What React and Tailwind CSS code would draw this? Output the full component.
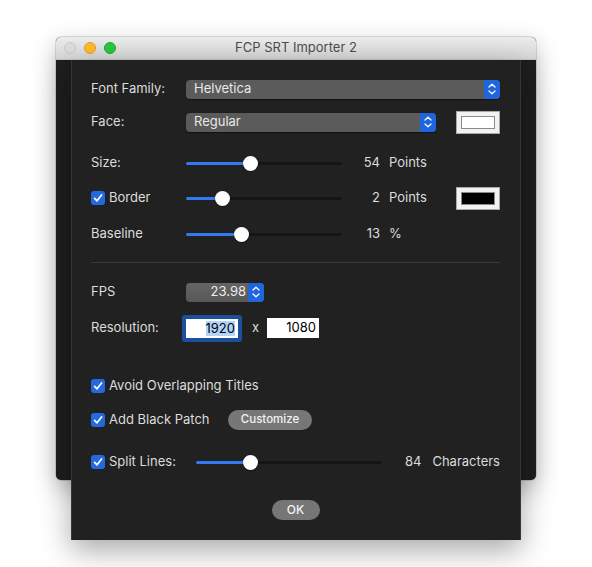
import React from "react";

const font = { fontFamily: "Inter, 'Liberation Sans', sans-serif" };

const Check = () => (
  <span className="flex h-[14px] w-[14px] shrink-0 items-center justify-center rounded-[3px] bg-[#2469e0]">
    <svg width="12" height="12" viewBox="0 0 12 12">
      <path d="M2.6 6.3 L5 8.8 L9.6 3" fill="none" stroke="white" strokeWidth="1.7" strokeLinecap="round" strokeLinejoin="round" />
    </svg>
  </span>
);

const Stepper = ({ w = "w-4" }) => (
  <span className={`flex h-full ${w} shrink-0 items-center justify-center rounded-r-[4px] bg-[#1f66de]`}>
    <svg width="10" height="14" viewBox="0 0 10 14">
      <path d="M2 5 L5 2.3 L8 5" fill="none" stroke="white" strokeWidth="1.3" strokeLinecap="round" strokeLinejoin="round" />
      <path d="M2 9 L5 11.7 L8 9" fill="none" stroke="white" strokeWidth="1.3" strokeLinecap="round" strokeLinejoin="round" />
    </svg>
  </span>
);

const Popup = ({ text, width }) => (
  <div className={`flex h-[19px] ${width} items-center rounded-[4px] bg-[#5b5b5b] shadow-[0_0.5px_1px_rgba(0,0,0,0.5)]`}>
    <span className="flex-1 pl-2 text-[13px] text-[#e8e8e8]">{text}</span>
    <Stepper />
  </div>
);

const Slider = ({ width, pos }) => (
  <div className={`relative h-[16px] ${width} shrink-0`}>
    <div className="absolute left-0 right-0 top-[6.5px] h-[3px] rounded-full bg-[#151515]" />
    <div className="absolute left-0 top-[6.5px] h-[3px] rounded-full bg-[#3279f3]" style={{ width: pos }} />
    <div
      className="absolute top-[0.5px] h-[15px] w-[15px] rounded-full bg-white shadow-[0_0.5px_1.5px_rgba(0,0,0,0.6)]"
      style={{ left: pos - 7.5 }}
    />
  </div>
);

const Well = ({ color }) => (
  <div className="ml-auto flex h-[23px] w-[44px] items-center justify-center border border-[#a9a9a9] bg-[#f2f2f2]">
    <div className={`h-[13px] w-[34px] border border-[#8a8a8a] ${color}`} />
  </div>
);

export default function App() {
  return (
    <div className="relative h-[567px] w-[592px] overflow-hidden bg-white" style={font}>
      {/* main window */}
      <div className="absolute left-[56px] top-[37px] flex h-[443px] w-[480px] flex-col overflow-hidden rounded-[5px] bg-[#1e1e1e] shadow-[0_8px_24px_rgba(0,0,0,0.28),0_0_0_0.5px_rgba(0,0,0,0.25)]">
        <div className="relative flex h-[23px] shrink-0 items-center border-b border-[#c4c4c4] bg-gradient-to-b from-[#ececec] to-[#d6d6d6]">
          <div className="flex items-center gap-[8px] pl-[8px]">
            <span className="h-[12px] w-[12px] rounded-full border border-[#c8c8c8] bg-[#dcdcdc]" />
            <span className="h-[12px] w-[12px] rounded-full border border-[#dea123] bg-[#fdbc2e]" />
            <span className="h-[12px] w-[12px] rounded-full border border-[#1aab29] bg-[#28c840]" />
          </div>
          <span className="absolute inset-x-0 text-center text-[13px] text-[#4d4d4d]">FCP SRT Importer 2</span>
        </div>
      </div>

      {/* sheet */}
      <div className="absolute left-[71px] top-[60px] flex h-[480px] w-[450px] flex-col border-x border-[#363636] bg-[#212121] pl-[19px] pr-[20px] pt-[19px] text-[13px] text-[#dcdcdc] shadow-[0_10px_28px_rgba(0,0,0,0.35)]">
        <div className="flex h-[20px] items-center">
          <span className="w-[95px]">Font Family:</span>
          <Popup text="Helvetica" width="w-[314px]" />
        </div>
        <div className="mt-[11px] flex h-[24px] items-center">
          <span className="w-[95px]">Face:</span>
          <Popup text="Regular" width="w-[250px]" />
          <Well color="bg-white" />
        </div>

        <div className="mt-[19px] flex h-[20px] items-center">
          <span className="w-[95px]">Size:</span>
          <Slider width="w-[156px]" pos={64} />
          <span className="w-[38px] text-right">54</span>
          <span className="ml-[9px]">Points</span>
        </div>
        <div className="mt-[13px] flex h-[24px] items-center">
          <span className="flex w-[95px] items-center gap-[4px]">
            <Check />
            Border
          </span>
          <Slider width="w-[156px]" pos={36} />
          <span className="w-[38px] text-right">2</span>
          <span className="ml-[9px]">Points</span>
          <Well color="bg-black" />
        </div>
        <div className="mt-[14px] flex h-[20px] items-center">
          <span className="w-[95px]">Baseline</span>
          <Slider width="w-[156px]" pos={55} />
          <span className="w-[38px] text-right">13</span>
          <span className="ml-[9px]">%</span>
        </div>

        <div className="mt-[18px] h-px bg-[#393939]" />

        <div className="mt-[19px] flex h-[20px] items-center">
          <span className="w-[95px]">FPS</span>
          <div className="flex h-[19px] w-[78px] items-center rounded-[4px] bg-gradient-to-b from-[#646464] to-[#585858]">
            <span className="flex-1 pr-[2px] text-right text-[13px] text-[#ececec]">23.98</span>
            <Stepper />
          </div>
        </div>
        <div className="mt-[12px] flex h-[28px] items-center">
          <span className="w-[91px]">Resolution:</span>
          <div className="flex h-[27px] w-[60px] items-center rounded-[3px] bg-[#1c4f9c] p-[4px]">
            <div className="flex h-full w-full items-center justify-end bg-white pr-[3px]">
              <span className="bg-[#b2d4fb] leading-[15px] text-black">1920</span>
            </div>
          </div>
          <span className="ml-[10px] w-[15px]">x</span>
          <div className="flex h-[20px] w-[52px] items-center justify-end bg-white pr-[3px] text-black">1080</div>
        </div>

        <div className="mt-[34px] flex h-[20px] items-center gap-[4px]">
          <Check />
          <span>Avoid Overlapping Titles</span>
        </div>
        <div className="mt-[14px] flex h-[20px] items-center">
          <span className="flex w-[137px] items-center gap-[4px]">
            <Check />
            Add Black Patch
          </span>
          <button className="h-[20px] w-[84px] rounded-full bg-[#777777] text-[11.5px] font-medium text-[#f2f2f2]">
            Customize
          </button>
        </div>

        <div className="mt-[22px] flex h-[20px] items-center">
          <span className="flex w-[106px] items-center gap-[4px]">
            <Check />
            Split Lines:
          </span>
          <Slider width="w-[186px]" pos={55} />
          <span className="w-[40px] text-right">84</span>
          <span className="ml-[11px]">Characters</span>
        </div>

        <div className="mt-[28px] flex h-[20px] justify-center">
          <button className="h-[20px] w-[48px] rounded-full bg-[#767676] text-[12px] font-medium text-[#f2f2f2]">OK</button>
        </div>
      </div>
    </div>
  );
}
